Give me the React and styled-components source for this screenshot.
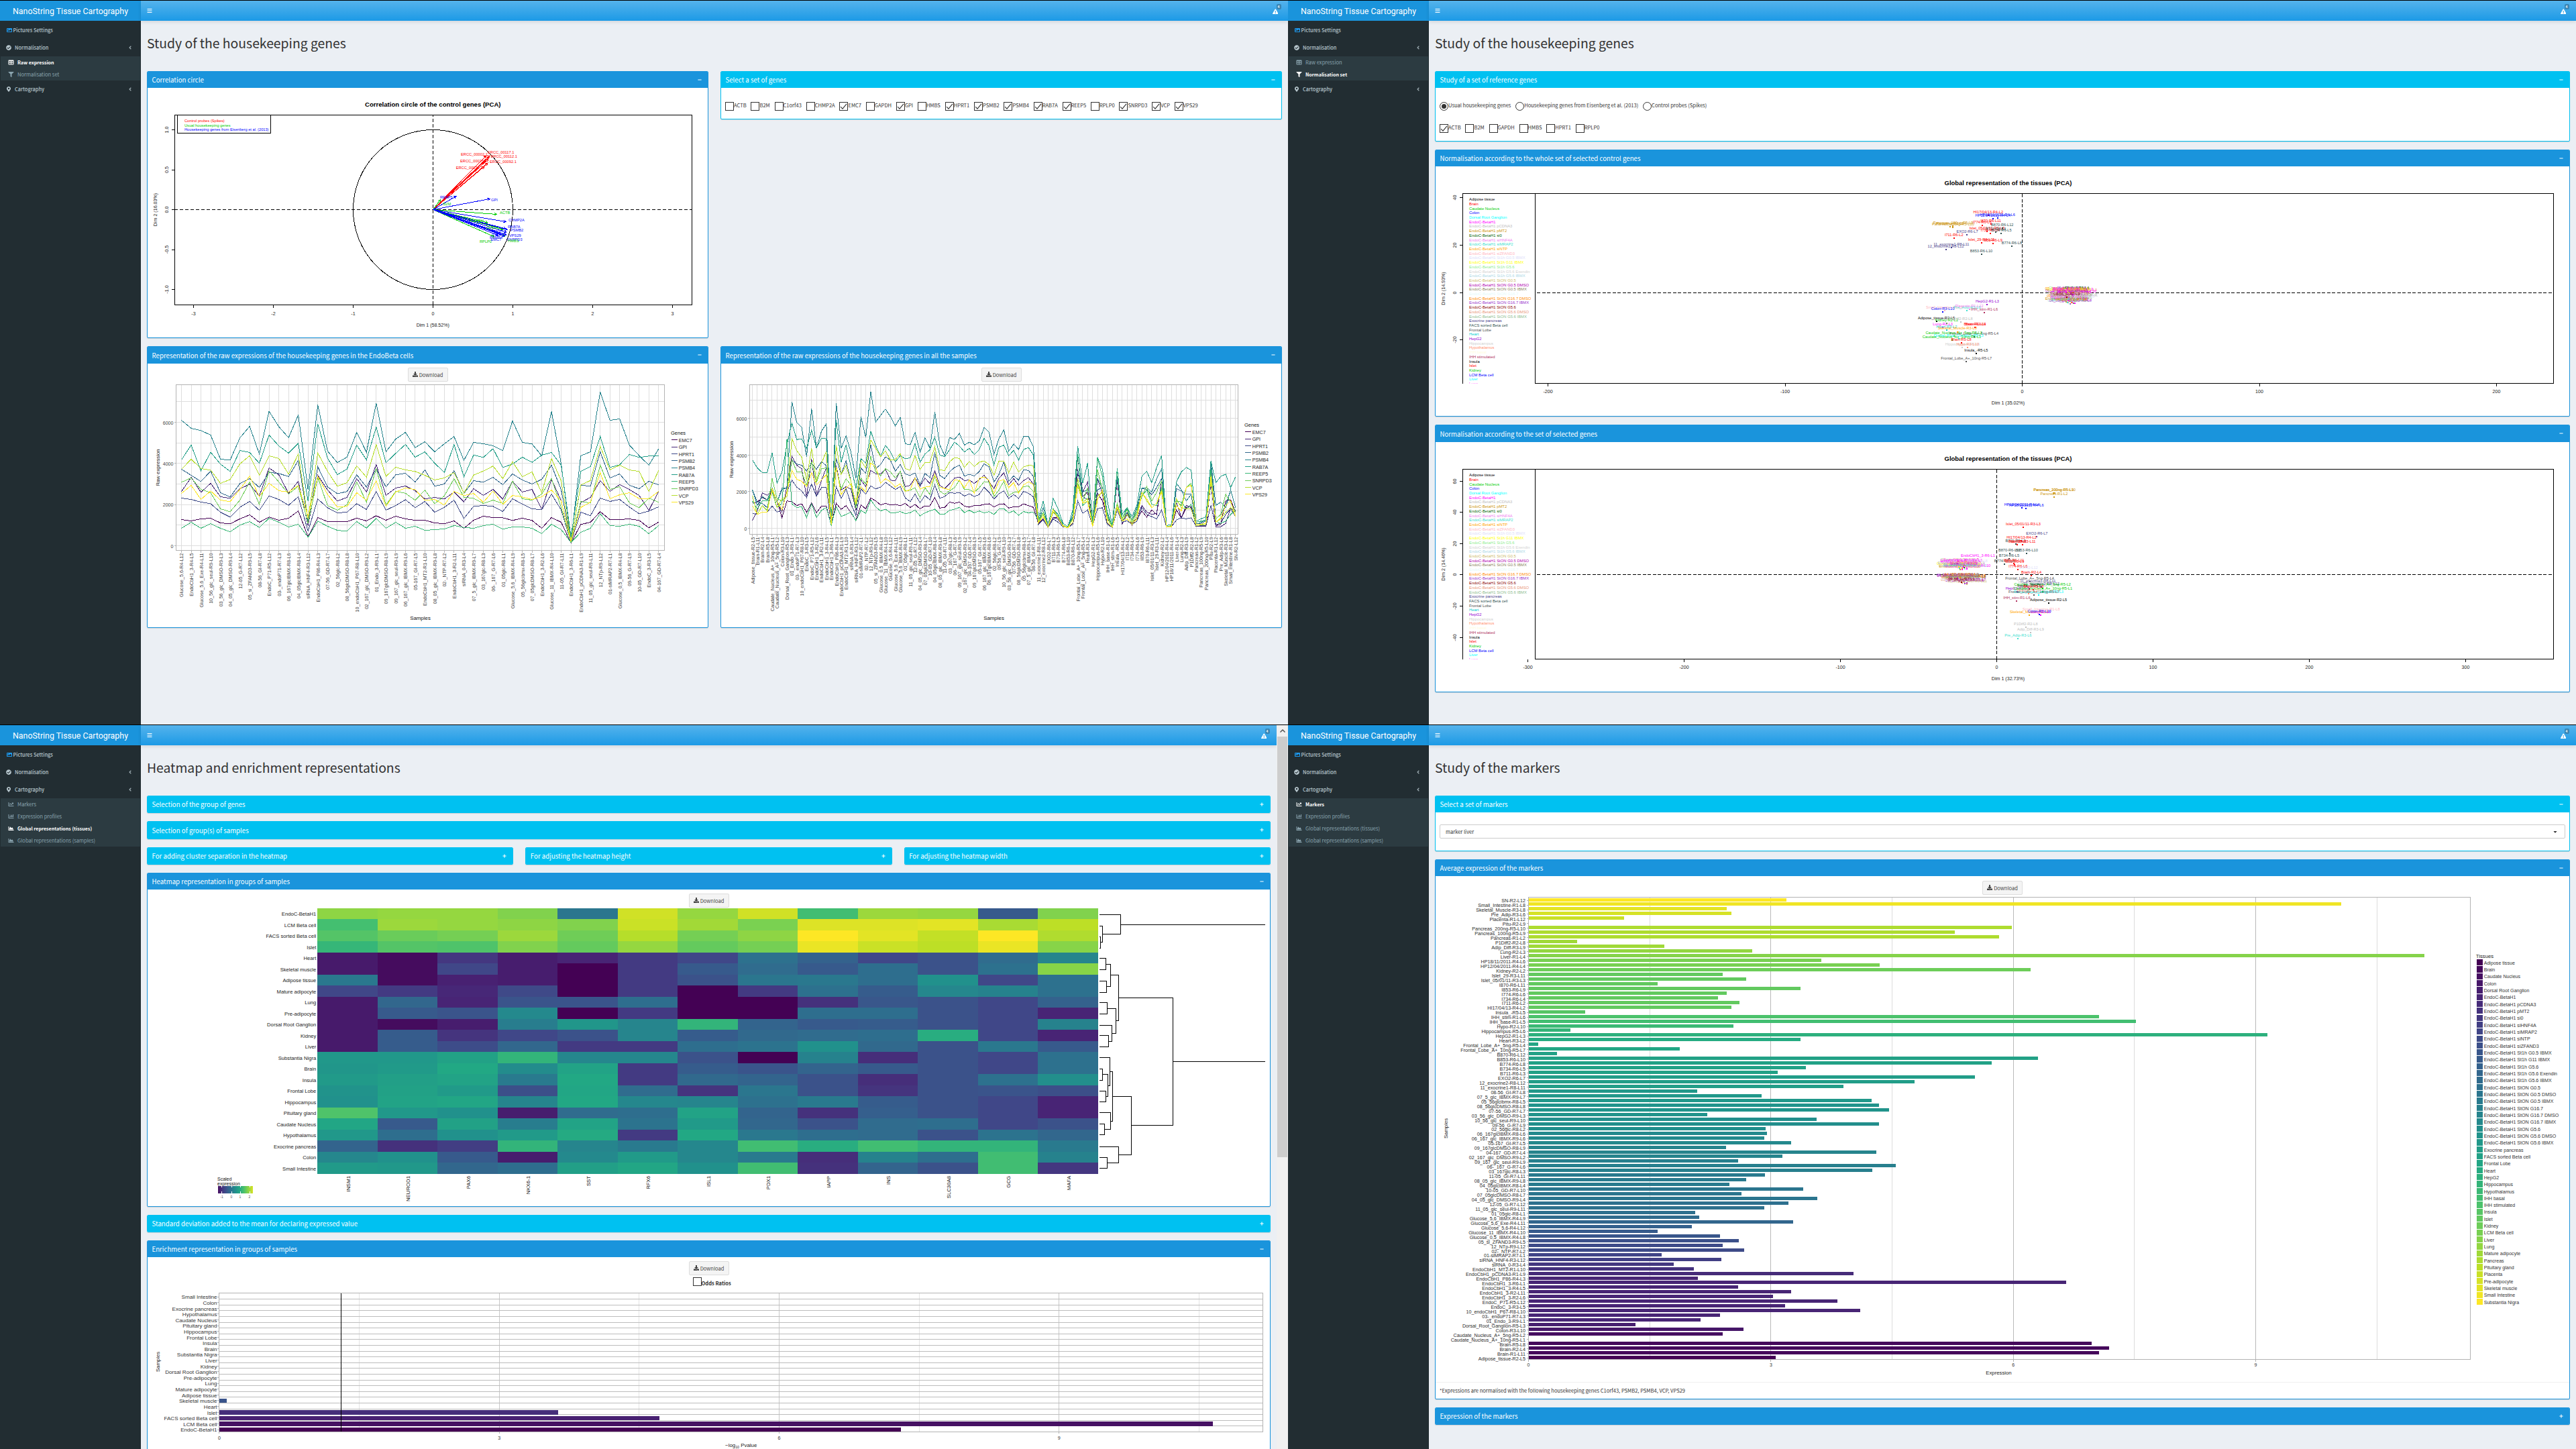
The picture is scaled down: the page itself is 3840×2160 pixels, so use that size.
import React from "react";
import styled, { createGlobalStyle, css } from "styled-components";
import {
  FaBars, FaCheckCircle, FaMapMarkerAlt, FaTable, FaFilter, FaChartLine, FaChartBar,
  FaChartArea, FaExclamationTriangle, FaDownload, FaAngleLeft, FaImage, FaCaretDown,
  FaChevronUp, FaChevronDown, FaMinus, FaPlus,
} from "react-icons/fa";

const BLUE = "#1a94dc";
const CYAN = "#00c1f1";
const UI = '"Noto Sans CJK SC", "Noto Sans", sans-serif';
const PLOT = '"Liberation Sans", Arial, sans-serif';

/* ---------- shell ---------- */

const Global = createGlobalStyle`
  html, body { margin: 0; padding: 0; background: #ebeff4; }
  *, *::before, *::after { box-sizing: border-box; }
`;

const Wall = styled.div`
  width: 3840px;
  height: 2160px;
  display: grid;
  grid-template-columns: 1920px 1920px;
  grid-template-rows: 1080px 1080px;
  overflow: hidden;
  font-family: ${UI};
  font-size: 7.55px;
  color: #333;
`;

const Frame = styled.section`
  border-top: 1px solid #000;
  display: grid;
  grid-template-columns: 210px 1fr ${(p) => (p.$scroll ? "17px" : "")};
  overflow: hidden;
  background: #ebeff4;
`;

const Sidebar = styled.aside`
  background: #222d32;
  color: #b8c7ce;
`;

const Logo = styled.div`
  height: 30px;
  line-height: 31px;
  background: ${BLUE};
  color: #fff;
  text-align: center;
  font-family: Roboto, sans-serif;
  font-size: 12.4px;
  white-space: nowrap;
`;

const MenuRow = styled.div`
  height: ${(p) => (p.$first ? 27 : 26)}px;
  padding: 0 12px 0 ${(p) => (p.$first ? 9.5 : 9)}px;
  display: flex;
  align-items: center;
  font-weight: 500;
  font-size: 7.4px;
  line-height: 10px;
  svg { margin-right: ${(p) => (p.$first ? 2 : 5)}px; flex: none; width: 8px; height: 8px; }
  svg.angle { margin: 0 1px 0 auto; width: 6px; height: 8px; opacity: 0.85; }
`;

const SubMenu = styled.div`
  margin: 0 1px;
  background: #2c3b41;
`;

const SubRow = styled.div`
  height: 18px;
  display: flex;
  align-items: center;
  padding-left: 11px;
  gap: 5px;
  line-height: 10px;
  font-size: ${(p) => (p.$on ? 7.1 : 7.55)}px;
  font-weight: ${(p) => (p.$on ? 700 : 400)};
  color: ${(p) => (p.$on ? "#fff" : "#8aa4af")};
  svg { width: 9px; height: 8px; }
`;

const Main = styled.main`
  display: flex;
  flex-direction: column;
  min-width: 0;
`;

const TopBar = styled.header`
  height: 30px;
  flex: none;
  background: linear-gradient(#55b3ec, #1c9ae6);
  box-shadow: 0 2px 5px rgba(0, 0, 0, 0.1);
  color: #fff;
  display: flex;
  align-items: center;
  justify-content: space-between;
  padding: 0 15px 0 8.5px;
`;

const Alert = styled.span`
  position: relative;
  display: inline-flex;
  padding-top: 2px;
`;

const Badge = styled.span`
  position: absolute;
  left: 6px;
  top: -5px;
  width: 7px;
  height: 8px;
  border-radius: 2px;
  background: #3a86b4;
  font: 700 5px/8px ${PLOT};
  text-align: center;
`;

const Content = styled.div`
  padding: 0 9px;
  display: flex;
  flex-direction: column;
`;

const Title = styled.h1`
  margin: 0;
  height: 75px;
  line-height: 66px;
  font-size: 19.35px;
  font-weight: 400;
`;

const Columns = styled.div`
  display: grid;
  grid-template-columns: repeat(${(p) => p.$n}, 1fr);
  gap: 18px;
  align-items: start;
`;

const Panel = styled.section`
  margin-bottom: ${(p) => p.$mb || 12}px;
  height: ${(p) => p.$h}px;
  flex: none;
  background: #fff;
  border: 1px solid ${(p) => p.$tone};
  border-radius: 2px;
  box-shadow: 0 1px 1px rgba(0, 0, 0, 0.12);
  overflow: hidden;
  display: flex;
  flex-direction: column;
`;

const PanelHead = styled.div`
  flex: none;
  height: ${(p) => (p.$h ? p.$h : 24)}px;
  ${(p) => p.$full && css`height: 100%;`}
  background: ${(p) => p.$tone};
  color: #fff;
  font-size: 9.68px;
  line-height: 12px;
  display: flex;
  align-items: center;
  justify-content: space-between;
  padding: 0 9px 0 6.5px;
  svg { width: 6px; height: 6px; margin-top: -1px; }
`;

const PanelBody = styled.div`
  flex: 1;
  min-height: 0;
  display: flex;
  flex-direction: column;
  align-items: stretch;
`;

const Choices = styled.div`
  display: flex;
  padding: ${(p) => p.$top}px 6px 0 ${(p) => p.$left || 6}px;
`;

const Choice = styled.label`
  display: flex;
  margin-right: 6.8px;
  line-height: 9px;
  white-space: nowrap;
  font-weight: ${(p) => (p.$bold ? 700 : 400)};
  align-items: ${(p) => (p.$bold ? "flex-end" : "flex-start")};
`;

const Tick = styled.span`
  width: 13px;
  height: 13px;
  flex: none;
  border: 1px solid #333;
  border-radius: ${(p) => (p.$round ? "50%" : "0")};
  display: inline-flex;
  align-items: center;
  justify-content: center;
`;

const Dot = styled.span`
  width: 7px;
  height: 7px;
  border-radius: 50%;
  background: #333;
`;

const Download = styled.button`
  flex: none;
  align-self: center;
  margin: ${(p) => p.$top || 6}px 0 0;
  width: 60px;
  height: 21px;
  padding: 0;
  border: 1px solid #ddd;
  border-radius: 2px;
  background: #f4f4f4;
  color: #444;
  font: 400 7.5px/10px ${UI};
  display: flex;
  align-items: center;
  justify-content: center;
  gap: 2px;
  svg { width: 8px; height: 8px; margin-top: -1px; }
`;

const Select = styled.div`
  margin: 18px 6px 0;
  height: 21px;
  border: 1px solid #ccc;
  border-radius: 2px;
  padding: 0 10px 0 8px;
  display: flex;
  align-items: center;
  justify-content: space-between;
`;

const FootNote = styled.div`
  height: 25px;
  flex: none;
  border-top: 1px solid #f0f0f0;
  padding: 0 6px;
  line-height: 24px;
`;

const ScrollTrack = styled.div`
  background: #f0f0f0;
  display: flex;
  flex-direction: column;
  align-items: center;
  color: #505050;
  > svg { width: 8px; height: 17px; flex: none; }
`;

const ScrollThumb = styled.div`
  width: 15px;
  height: 627px;
  background: #cdcdcd;
  margin-bottom: auto;
`;

const Chart = styled.svg`
  display: block;
  flex: none;
  font-family: ${PLOT};
  shape-rendering: crispEdges;
  width: ${(p) => p.width}px;
  height: ${(p) => p.height}px;
`;

/* ---------- shared pieces ---------- */

const TickMark = () => (
  <svg width="11" height="11" viewBox="0 0 11 11" fill="none" stroke="#333" strokeWidth="1.1">
    <path d="M1 6.2 L4 9.2 L10 1.8" />
  </svg>
);

function Box({ title, tone = BLUE, h, headH, mb, open = true, children }) {
  return (
    <Panel $tone={tone} $h={h} $mb={mb}>
      <PanelHead $tone={tone} $h={headH} $full={!open}>
        <span>{title}</span>
        {open ? <FaMinus /> : <FaPlus />}
      </PanelHead>
      {open && <PanelBody>{children}</PanelBody>}
    </Panel>
  );
}

const DownloadButton = ({ top }) => (
  <Download $top={top}><FaDownload />Download</Download>
);

function Checks({ items, checked, top, left }) {
  return (
    <Choices $top={top} $left={left}>
      {items.map((g) => (
        <Choice key={g}><Tick>{checked.includes(g) && <TickMark />}</Tick>{g}</Choice>
      ))}
    </Choices>
  );
}

const NORMALISATION = [["Raw expression", FaTable], ["Normalisation set", FaFilter]];
const CARTOGRAPHY = [
  ["Markers", FaChartLine],
  ["Expression profiles", FaChartBar],
  ["Global representations (tissues)", FaChartArea],
  ["Global representations (samples)", FaChartArea],
];

const Sub = ({ items, active }) => (
  <SubMenu>
    {items.map(([name, Icon]) => (
      <SubRow key={name} $on={name === active}><Icon />{name}</SubRow>
    ))}
  </SubMenu>
);

function Screen({ title, section, active, scroll, children }) {
  return (
    <Frame $scroll={scroll}>
      <Sidebar>
        <Logo>NanoString Tissue Cartography</Logo>
        <MenuRow $first><FaImage color="#1d9af0" />Pictures Settings</MenuRow>
        <MenuRow><FaCheckCircle />Normalisation<FaAngleLeft className="angle" /></MenuRow>
        {section === "norm" && <Sub items={NORMALISATION} active={active} />}
        <MenuRow><FaMapMarkerAlt />Cartography<FaAngleLeft className="angle" /></MenuRow>
        {section === "carto" && <Sub items={CARTOGRAPHY} active={active} />}
      </Sidebar>
      <Main>
        <TopBar>
          <FaBars size={8} />
          <Alert><FaExclamationTriangle size={8.5} /><Badge>4</Badge></Alert>
        </TopBar>
        <Content>
          <Title>{title}</Title>
          {children}
        </Content>
      </Main>
      {scroll && (
        <ScrollTrack><FaChevronUp /><ScrollThumb /><FaChevronDown /></ScrollTrack>
      )}
    </Frame>
  );
}

/* ---------- colour scale and sample data ---------- */

const STOPS = ["440154", "482475", "414487", "355f8d", "2a788e", "21918c", "22a884", "44bf70", "7ad151", "bddf26", "fde725"]
  .map((h) => [0, 2, 4].map((i) => parseInt(h.slice(i, i + 2), 16)));

function viridis(t) {
  const p = Math.min(Math.max(t, 0), 1) * 10;
  const i = Math.min(Math.floor(p), 9);
  const c = STOPS[i].map((v, k) => Math.round(v + (STOPS[i + 1][k] - v) * (p - i)));
  return `rgb(${c.join(",")})`;
}

const TISSUES = [
  "Adipose tissue", "Brain", "Caudate Nucleus", "Colon", "Dorsal Root Ganglion", "EndoC-BetaH1",
  "EndoC-BetaH1 pCDNA3", "EndoC-BetaH1 pMT2", "EndoC-BetaH1 si0", "EndoC-BetaH1 siHNF4A",
  "EndoC-BetaH1 siMRAP2", "EndoC-BetaH1 siNTP", "EndoC-BetaH1 siZFAND3", "EndoC-BetaH1 St1h G0.5 IBMX",
  "EndoC-BetaH1 St1h G11 IBMX", "EndoC-BetaH1 St1h G5.6", "EndoC-BetaH1 St1h G5.6 Exendin",
  "EndoC-BetaH1 St1h G5.6 IBMX", "EndoC-BetaH1 StON G0.5", "EndoC-BetaH1 StON G0.5 DMSO",
  "EndoC-BetaH1 StON G0.5 IBMX", "EndoC-BetaH1 StON G16.7", "EndoC-BetaH1 StON G16.7 DMSO",
  "EndoC-BetaH1 StON G16.7 IBMX", "EndoC-BetaH1 StON G5.6", "EndoC-BetaH1 StON G5.6 DMSO",
  "EndoC-BetaH1 StON G5.6 IBMX", "Exocrine pancreas", "FACS sorted Beta cell", "Frontal Lobe",
  "Heart", "HepG2", "Hippocampus", "Hypothalamus", "IHH basal", "IHH stimulated", "Insula", "Islet",
  "Kidney", "LCM Beta cell", "Liver", "Lung", "Mature adipocyte", "Pancreas", "Pituitary gland",
  "Placenta", "Pre-adipocyte", "Skeletal muscle", "Small Intestine", "Substantia Nigra",
];

const TISSUE_COLORS = [
  "#000", "#f00", "#00cd00", "#00f", "#0ff", "#f0f", "#bebebe", "#cd950c", "#006400", "#ee82ee",
  "#40e0d0", "#ffa500", "#ffb6c1", "#e0e0fa", "#ff0", "#90ee90", "#d3d3d3", "#add8e6", "#cdba6c",
  "#b000b0", "#8b8360", "#e4fafa", "#ff8c00", "#9932cc", "#8b0000", "#e9967a", "#8fbc8f", "#483d8b",
  "#2f4f4f", "#4d4d4d", "#00ced1", "#9400d3", "#cfcfcf", "#ff9070", "#fffde0", "#b03060",
  "#000", "#f00", "#00cd00", "#00f", "#0ff", "#f0f", "#bebebe", "#cd950c", "#006400", "#ee82ee",
  "#40e0d0", "#ffa500", "#ffb6c1", "#e0e0fa",
];

const PER_TISSUE = [1, 3, 2, 1, 1, 10, 1, 1, 1, 1, 1, 2, 1, 1, 1, 1, 1, 1, 3, 3, 3, 3, 3, 3, 3, 3, 3, 3, 5, 2, 1, 1, 1, 1, 1, 1, 1, 8, 1, 2, 1, 1, 2, 3, 1, 1, 1, 1, 1, 1];
const TISSUE_OF = PER_TISSUE.flatMap((n, i) => Array(n).fill(i));

const SAMPLES = `Adipose_tissue-R2-L5 Brain-R1-L11 Brain-R2-L4 Brain-R5-L8 Caudate_Nucleus_A+_10ng-R5-L1
Caudate_Nucleus_A+_5ng-R5-L2 Colon-R3-L10 Dorsal_Root_Ganglion-R5-L3 01_Endo_3-R9-L1 03-_endoP71-R7-L3
10_endoCbH1_P67-R8-L10 EndoC_3-R3-L5 EndoC_P71-R5-L12 EndoCbH1_3-R2-L6 EndoCbH1_3-R2-L11 EndoCbH1_3-R4-L5
EndoCbH1_3-R6-L1 EndoCbH1_P86-R4-L3 EndoCbH1_pCDNA3-R1-L9 EndoCbH1_MT2-R1-L10 siRNA_0-R3-L4
siRNA_HNF4-R3-L12 01-siMRAP2-R7-L1 02-_NTP-R7-L2 12_NTp-R9-L12 05_si_ZFAND3-R9-L5 Glucose_0,5_IBMX-R4-L8
Glucose_11_IBMX-R4-L10 Glucose_5,6-R4-L12 Glucose_5,6_Exe-R4-L11 Glucose_5,6_IBMX-R4-L9 01_05glc-R8-L1
11_05_glc_seul-R9-L11 12-05_G-R7-L12 04_05_glc_DMSO-R9-L4 07_05glcDMSO-R8-L7 10-05_GD-R7-L10
04_05glcIBMX-R8-L4 08_05_glc_IBMX-R9-L8 11-05_GI-R7-L11 03_167glc-R8-L3 06-_167_G-R7-L6
09_167_glc_seul-R9-L9 02_167_glc_DMSO-R9-L2 04-167_GD-R7-L4 09_167glcDMSO-R8-L9 05-167_GI-R7-L5
06_167_glc_IBMX-R9-L6 06_167glcIBMX-R8-L6 02_56glc-R8-L2 09-56_G-R7-L9 10_56_glc_seul-R9-L10
03_56_glc_DMSO-R9-L3 07-56_GD-R7-L7 08_56glcDMSO-R8-L8 05_56glcibmx-R8-L5 07_5_glc_IBMX-R9-L7
08-56_GI-R7-L8 11_exocrine1-R8-L11 12_exocrine2-R8-L12 EXO2-R6-L7 B711-R6-L3 B734-R6-L5 B774-R6-L8
B853-R6-L10 B870-R6-L12 Frontal_Lobe_A+_10ng-R5-L7 Frontal_Lobe_A+_5ng-R5-L4 Heart-R3-L2 HepG2-R1-L3
Hippocampus-R5-L6 Hypo-R2-L10 IHH_base-R1-L5 IHH_stim-R1-L6 Insula_-R5-L5 HI17/04/13-R4-L2 I711-R6-L2
I734-R6-L4 I774-R6-L6 I853-R6-L9 I870-R6-L11 Islet_05/01/11-R3-L3 Islet_29-R3-L11 Kidney-R2-L2
HP12/04/2011-R4-L4 HP18/11/2011-R4-L6 Liver-R1-L4 Lung-R2-L3 Adip_Diff-R3-L9 P1Diff2-R2-L8 Pancreas-R1-L2
Pancreas_100ng-R5-L9 Pancreas_200ng-R5-L10 Pitu-R2-L9 Placenta-R1-L12 Pre_Adip-R3-L6
Skeletal_Muscle-R3-L8 Small_Intestine-R1-L8 SN-R2-L12`.split(/\s+/);

const ENDO = `Glucose_5,6-R4-L12 EndoCbH1_3-R4-L5 Glucose_5,6_Exe-R4-L11 10_56_glc_seul-R9-L10
03_56_glc_DMSO-R9-L3 04_05_glc_DMSO-R9-L4 12-05_G-R7-L12 05_si_ZFAND3-R9-L5 08-56_GI-R7-L8
EndoC_P71-R5-L12 03-_endoP71-R7-L3 06_167glcIBMX-R8-L6 04_05glcIBMX-R8-L4 siRNA_HNF4-R3-L12
EndoCbH1_P86-R4-L3 07-56_GD-R7-L7 02_56glc-R8-L2 08_56glcDMSO-R8-L8 10_endoCbH1_P67-R8-L10
02_167_glc_DMSO-R9-L2 01_Endo_3-R9-L1 09_167glcDMSO-R8-L9 09_167_glc_seul-R9-L9 06_167_glc_IBMX-R9-L6
05-167_GI-R7-L5 EndoCbH1_MT2-R1-L10 08_05_glc_IBMX-R9-L8 02-_NTP-R7-L2 EndoCbH1_3-R2-L11 siRNA_0-R3-L4
07_5_glc_IBMX-R9-L7 03_167glc-R8-L3 06-_167_G-R7-L6 01_05glc-R8-L1 Glucose_5,6_IBMX-R4-L9
05_56glcibmx-R8-L5 07_05glcDMSO-R8-L7 EndoCbH1_3-R2-L6 Glucose_11_IBMX-R4-L10 11-05_GI-R7-L11
EndoCbH1_3-R6-L1 EndoCbH1_pCDNA3-R1-L9 11_05_glc_seul-R9-L11 12_NTp-R9-L12 01-siMRAP2-R7-L1
Glucose_0,5_IBMX-R4-L8 09-56_G-R7-L9 10-05_GD-R7-L10 EndoC_3-R3-L5 04-167_GD-R7-L4`.split(/\s+/);

const GENES = ["EMC7", "GPI", "HPRT1", "PSMB2", "PSMB4", "RAB7A", "REEP5", "SNRPD3", "VCP", "VPS29"];

/* plotted heights of each gene: `endo` follows ENDO, `head`/`tail` the remaining samples */
const SERIES = {
  EMC7: {
    endo: [823,829,820,817,838,842,820,802,835,812,826,817,785,900,814,832,832,832,817,829,806,826,808,820,826,826,838,842,829,862,826,808,814,815,827,817,827,862,814,835,928,845,835,788,823,823,820,827,860,834],
    head: [750,745,725,735,695,740,815,740],
    tail: [840,820,858,815,815,850,858,835,540,720,700,850,705,740,820,855,650,845,790,848,820,785,812,780,800,650,855,855,780,817,770,765,853,853,853,760,850,845,740,735,790],
  },
  GPI: {
    endo: [698,634,701,661,721,728,686,665,718,592,623,706,652,850,625,690,740,724,640,700,577,715,682,673,694,731,724,731,700,743,685,715,688,731,652,700,688,778,643,740,925,747,724,649,697,667,689,715,782,697],
    head: [827,785,704,714,695,740,790,675],
    tail: [842,820,858,815,820,855,858,840,612,700,655,850,640,710,840,857,640,840,800,840,815,760,790,800,795,650,857,855,745,815,760,770,852,852,852,660,855,855,840,770,790],
  },
  HPRT1: {
    endo: [727,733,745,752,790,812,768,742,782,717,733,759,721,875,731,770,793,790,752,778,698,781,760,734,770,742,790,768,736,818,764,760,764,787,730,754,775,779,709,780,925,790,806,727,742,733,767,797,785,766],
    head: [795,800,790,790,762,790,780,700],
    tail: [845,825,858,820,835,855,858,845,740,795,780,850,775,770,845,858,780,835,828,845,830,770,800,810,820,780,857,855,825,815,820,815,852,850,850,760,845,840,800,775,810],
  },
  PSMB2: {
    endo: [598,625,653,606,703,722,662,640,680,612,617,631,559,830,587,677,707,698,623,678,596,677,623,616,655,601,674,664,605,706,649,656,634,667,619,646,664,643,580,690,925,669,674,520,637,619,670,685,652,668],
    head: [690,745,750,770,690,745,683,683],
    tail: [835,790,857,790,810,850,858,810,600,720,735,845,690,680,800,856,640,830,790,830,780,683,690,712,680,640,855,852,685,695,710,710,840,840,830,570,820,800,760,690,770],
  },
  PSMB4: {
    endo: [379,415,425,445,553,557,458,406,530,339,408,457,355,690,310,516,568,544,433,522,303,520,463,433,501,475,520,484,452,558,478,484,493,515,382,478,485,538,340,575,920,538,520,253,379,373,490,537,580,507],
    head: [690,760,720,735,680,745,690,680],
    tail: [830,770,855,775,800,848,858,800,540,700,690,840,640,680,790,855,630,820,775,825,770,683,680,700,640,597,855,850,660,690,740,710,845,835,825,565,760,745,770,690,770],
  },
  RAB7A: {
    endo: [556,490,605,522,575,608,514,523,571,445,494,526,482,740,395,548,622,597,490,556,410,569,527,487,544,520,571,612,487,632,534,545,506,590,575,544,567,535,523,580,900,608,586,451,590,578,532,545,539,538],
    head: [556,592,613,614,525,660,610,490],
    tail: [820,740,855,728,775,840,855,780,495,660,570,830,545,600,740,850,595,800,770,810,760,628,608,658,590,537,850,845,655,610,590,602,830,820,810,562,658,630,620,680,632],
  },
  REEP5: {
    endo: [862,835,862,841,862,878,848,832,858,817,835,856,844,902,830,853,871,875,832,861,818,862,835,862,853,871,868,865,850,858,862,850,844,866,856,856,862,886,844,868,925,880,862,797,850,853,844,853,886,850],
    head: [740,775,740,740,700,770,750,465],
    tail: [825,790,855,780,800,850,858,815,530,760,740,845,550,630,800,850,600,820,770,830,790,720,690,755,760,680,855,850,740,745,775,755,835,830,825,600,830,840,830,800,780],
  },
  SNRPD3: {
    endo: [656,637,688,703,775,788,736,655,755,605,655,709,674,840,635,760,781,757,655,745,595,758,697,705,737,691,752,717,640,723,728,751,736,751,652,730,736,709,640,770,925,742,749,579,688,676,748,770,727,746],
    head: [715,800,760,780,640,730,740,720],
    tail: [830,790,855,775,810,848,858,820,660,740,680,845,600,690,810,855,750,820,780,830,780,720,675,740,700,650,855,850,740,760,680,660,845,845,840,620,820,800,710,745,790],
  },
  VCP: {
    endo: [598,553,595,602,661,644,574,538,625,538,550,620,530,820,525,607,674,658,583,634,488,630,589,601,608,625,646,637,613,705,624,606,584,640,564,632,610,703,550,650,920,669,648,496,600,580,601,608,697,604],
    head: [715,800,760,785,690,770,730,720],
    tail: [835,800,857,790,815,850,858,820,640,745,730,850,720,700,820,857,760,825,800,840,800,700,740,770,750,690,857,852,730,770,775,775,850,848,845,650,835,820,790,770,800],
  },
  VPS29: {
    endo: [706,670,733,695,736,743,688,629,720,661,694,700,671,810,630,710,767,764,703,737,649,764,700,682,689,737,733,758,697,716,706,746,695,755,715,722,733,721,691,740,920,769,745,613,730,712,703,730,730,697],
    head: [760,800,790,790,685,740,780,700],
    tail: [838,810,858,780,815,853,860,835,670,750,740,855,735,690,835,857,770,830,820,845,820,705,730,770,750,700,857,855,760,785,680,670,843,843,840,630,835,815,760,740,810],
  },
};
const endoValue = (v) => ((940 - v) / 184) * 2000;
const wideValue = (v) => ((862 - v) / 163.6) * 2000;
const ENDO_SERIES = GENES.map((g) => SERIES[g].endo.map(endoValue));
const ALL_SERIES = GENES.map((g) => [
  ...SERIES[g].head.map(wideValue),
  ...SAMPLES.slice(8, 58).map((s) => endoValue(SERIES[g].endo[ENDO.indexOf(s)])),
  ...SERIES[g].tail.map(wideValue),
]);

/* ---------- charts ---------- */

const T = ({ x, y, s = 7.1, a = "middle", fill = "#444", w, r, children }) => (
  <text
    x={x} y={y} dy=".35em" fontSize={s} textAnchor={a} fill={fill} fontWeight={w}
    transform={r ? `rotate(-90 ${x} ${y})` : undefined}
  >{children}</text>
);

function LineChart({ left, names, series, frame, bottom, first, step, unit, zero, legendX, legendY, labelY }) {
  const [fx, fw] = frame;
  const fy = 573.5;
  const px = (i) => first + i * step;
  const py = (v) => zero - v * unit;
  return (
    <Chart width={835} height={366} viewBox={`${left} 569 835 366`}>
      <g stroke="#dedede" strokeWidth="1">
        {[0, 1, 2, 3, 4, 5, 6, 7].map((k) => <path key={k} d={`M${fx} ${py(k * 1000)}h${fw}`} />)}
        {names.map((n, i) => <path key={n} d={`M${px(i)} ${fy}V${bottom}`} />)}
      </g>
      {series.map((s, k) => (
        <polyline
          key={k} fill="none" stroke={viridis(k / 9)} strokeWidth="1"
          points={s.map((v, i) => `${px(i).toFixed(1)},${py(v).toFixed(1)}`).join(" ")}
        />
      ))}
      <rect x={fx} y={fy} width={fw} height={bottom - fy} fill="none" stroke="#b3b3b3" />
      {[0, 2000, 4000, 6000].map((v) => (
        <g key={v}>
          <path d={`M${fx - 3} ${py(v)}h3`} stroke="#b3b3b3" />
          <T x={fx - 4} y={py(v) + 0.8} a="end">{v}</T>
        </g>
      ))}
      {names.map((n, i) => (
        <g key={n}>
          <path d={`M${px(i)} ${bottom}v3`} stroke="#b3b3b3" />
          <T x={px(i) + 0.5} y={bottom + 4} a="end" r>{n}</T>
        </g>
      ))}
      <T x={fx - 27} y={labelY} s={7.75} fill="#111" r>Raw expression</T>
      <T x={fx + fw / 2} y={921.7} s={7.9} fill="#111">Samples</T>
      <T x={legendX} y={legendY} s={7.5} a="start" fill="#111">Genes</T>
      {GENES.map((g, k) => (
        <g key={g}>
          <path d={`M${legendX + 1} ${legendY + 10.6 + k * 10.33}h8.5`} stroke={viridis(k / 9)} strokeWidth="1" />
          <T x={legendX + 11.7} y={legendY + 11.2 + k * 10.33} s={7.2} a="start" fill="#222">{g}</T>
        </g>
      ))}
    </Chart>
  );
}

const ARROWS = [
  ["#f00", 730, 232], ["#f00", 724.7, 232], ["#f00", 728, 237], ["#f00", 727, 243], ["#f00", 722, 248], ["#f00", 729, 234],
  ["#00cd00", 656.5, 298], ["#00cd00", 740.4, 319.5], ["#00cd00", 727, 332], ["#00cd00", 737, 353], ["#00cd00", 750, 342], ["#00cd00", 753, 352],
  ["#00f", 680, 292.5], ["#00f", 730, 296.5], ["#00f", 754, 330.5], ["#00f", 754, 341], ["#00f", 756.5, 342.5], ["#00f", 755, 346],
  ["#00f", 755, 350], ["#00f", 752, 352], ["#00f", 748, 350], ["#00f", 745, 348], ["#00f", 743, 351],
];
const ARROW_LABELS = [
  ["ERCC_00117.1", 727, 227, "#f00"], ["ERCC_00002.1", 687, 230, "#f00"], ["ERCC_00112.1", 731.5, 233, "#f00"],
  ["ERCC_00035.1", 686, 240, "#f00"], ["ERCC_00092.1", 730, 241, "#f00"], ["ERCC_00034.1", 679.7, 250, "#f00"],
  ["REEP5", 656, 294, "#00f"], ["B2M", 660.5, 304, "#00cd00"], ["GPI", 732, 298, "#00f"], ["ACTB", 745, 317, "#00cd00"],
  ["CHMP2A", 758, 328, "#00f"], ["GAPDH", 701, 329, "#00cd00"], ["RAB7A", 757, 338, "#00f"], ["PSMB2", 761, 343, "#00f"],
  ["HPRT1", 725, 340, "#00cd00"], ["VCP", 736, 345, "#00f"], ["C1orf43", 733, 349, "#00f"], ["VPS29", 759, 351, "#00f"],
  ["PSMB4", 730, 354, "#00f"], ["EMC7", 731.5, 357, "#00f"], ["SNRPD3", 755.5, 357, "#00f"], ["HMBS", 757, 359.5, "#00cd00"],
  ["RPLP0", 715, 360, "#00cd00"],
];

function CorrelationCircle() {
  const cx = 645.5, cy = 312.5;
  return (
    <Chart width={835} height={372} viewBox="220 131 835 372">
      <T x={645.3} y={155.7} s={9.6} w="700" fill="#000">Correlation circle of the control genes (PCA)</T>
      <rect x={260.5} y={171.5} width={771} height={283} fill="none" stroke="#000" />
      <rect x={264.5} y={171.5} width={139} height={27} fill="none" stroke="#000" />
      <T x={275} y={180.3} s={5.7} a="start" fill="#f00">Control probes (Spikes)</T>
      <T x={275} y={186.6} s={5.7} a="start" fill="#00cd00">Usual housekeeping genes</T>
      <T x={275} y={193.2} s={5.7} a="start" fill="#00f">Housekeeping genes from Eisenberg et al. (2013)</T>
      <circle cx={cx} cy={cy} r={119} fill="none" stroke="#000" />
      <path d={`M260 ${cy}H1031M${cx} 454V171`} stroke="#000" strokeDasharray="5 3" fill="none" />
      {[-3, -2, -1, 0, 1, 2, 3].map((v) => (
        <g key={v}>
          <path d={`M${cx + v * 119} 454.5v4.5`} stroke="#000" />
          <T x={cx + v * 119} y={467.5} fill="#222">{v}</T>
        </g>
      ))}
      {[-1, -0.5, 0, 0.5, 1].map((v) => (
        <g key={v}>
          <path d={`M260.5 ${cy - v * 119}h-4.5`} stroke="#000" />
          <T x={248.5} y={cy - v * 119} fill="#222" r>{v.toFixed(1)}</T>
        </g>
      ))}
      <T x={645.3} y={484.7} fill="#222">Dim 1 (58.52%)</T>
      <T x={232} y={312.5} fill="#222" r>Dim 2 (16.03%)</T>
      {ARROWS.map(([c, x, y], i) => {
        const a = Math.atan2(y - cy, x - cx);
        const tip = (d) => `${(x - 4 * Math.cos(a + d)).toFixed(1)} ${(y - 4 * Math.sin(a + d)).toFixed(1)}`;
        return <path key={i} d={`M${cx} ${cy}L${x} ${y}M${tip(0.5)}L${x} ${y}L${tip(-0.5)}`} stroke={c} fill="none" />;
      })}
      {ARROW_LABELS.map(([n, x, y, c]) => <T key={n} x={x} y={y} s={5.7} a="start" fill={c}>{n}</T>)}
    </Chart>
  );
}

const tissueColor = (name) => TISSUE_COLORS[TISSUE_OF[SAMPLES.indexOf(name)]];

const PCA_ALL = [
  ["HI17/04/13-R4-L2", 194, 467], ["HP12/04/2011-R4-L4", 205, 475], ["HP18/11/2011-R4-L6", 216, 473],
  ["Pancreas_200ng-R5-L10", 112, 494], ["Pancreas_100ng-R5-L9", 112, 491], ["Pancreas-R1-L2", 105, 493],
  ["I711-R6-L2", 114, 518], ["EXO2-R6-L7", 145, 510], ["11_exocrine1-R8-L11", 108, 538], ["12_exocrine2-R8-L12", 95, 543],
  ["I774-R6-L6", 180, 490], ["I870-R6-L11", 200, 487], ["B870-R6-L12", 227, 496], ["Islet_05/01/11-R3-L3", 191, 503],
  ["B711-R6-L3", 212, 504], ["I734-R6-L4", 199, 507], ["B734-R6-L5", 225, 507], ["Islet_29-R3-L11", 178, 528],
  ["I853-R6-L9", 205, 530], ["B774-R6-L8", 249, 535], ["B853-R6-L10", 178, 553], ["HepG2-R1-L3", 192, 664],
  ["IHH_stim-R1-L6", 185, 682], ["Small_Intestine-R1-L8", 92, 678], ["Colon-R3-L10", 88, 680],
  ["Pre_Adip-R3-L6", 145, 677], ["Placenta-R1-L12", 150, 674], ["Adipose_tissue-R2-L5", 73, 701],
  ["Kidney-R2-L2", 97, 705], ["P1Diff2-R2-L8", 130, 703], ["Brain-R1-L11", 163, 714], ["Brain-R2-L4", 165, 714],
  ["Lung-R2-L3", 88, 714], ["Heart-R3-L2", 97, 721], ["Skeletal_Muscle-R3-L8", 122, 724],
  ["Frontal_Lobe_A+_5ng-R5-L4", 161, 735], ["Caudate_Nucleus_A+_5ng-R5-L2", 114, 734],
  ["Dorsal_Root_Ganglion-R5-L3", 125, 740], ["Caudate_Nucleus_A+_10ng-R5-L1", 109, 743], ["Brain-R5-L8", 131, 748],
  ["Hippocampus-R5-L6", 134, 759], ["Hypo-R2-L10", 146, 759], ["Insula_-R5-L5", 166, 772],
  ["Frontal_Lobe_A+_10ng-R5-L7", 143, 790],
  ...ENDO.map((n, i) => [n, 388 + ((i * 37) % 25) - 12, 634 + ((i * 23) % 29)]),
];
const PCA_SELECTED = [
  ["Pancreas_200ng-R5-L10", 349, 1080], ["Pancreas_100ng-R5-L9", 347, 1079], ["Pancreas-R1-L2", 348, 1089],
  ["HP12/04/2011-R4-L4", 273, 1112], ["HP18/11/2011-R4-L6", 283, 1114], ["Islet_05/01/11-R3-L3", 276, 1155],
  ["EXO2-R6-L7", 308, 1176], ["HI17/04/13-R4-L2", 272, 1184], ["B711-R6-L3", 258, 1192], ["Islet_29-R3-L11", 274, 1194],
  ["I711-R6-L2", 262, 1194], ["B870-R6-L12", 244, 1213], ["B853-R6-L10", 284, 1213], ["B734-R6-L5", 243, 1225],
  ["EndoCbH1_3-R6-L1", 170, 1225], ["B774-R6-L8", 232, 1237], ["I870-R6-L11", 254, 1235], ["I853-R6-L9", 256, 1238],
  ["I774-R6-L6", 264, 1248], ["SN-R2-L12", 288, 1252], ["Brain-R2-L4", 295, 1262], ["Frontal_Lobe_A+_5ng-R5-L4", 291, 1275],
  ["11_exocrine1-R8-L11", 310, 1281], ["Hippocampus-R5-L6", 305, 1284], ["12_exocrine2-R8-L12", 318, 1287],
  ["Caudate_Nucleus_A+_5ng-R5-L2", 321, 1289], ["Insula_-R5-L5", 290, 1291], ["HepG2-R1-L3", 262, 1297],
  ["Caudate_Nucleus_A+_10ng-R5-L1", 322, 1297], ["Brain-R5-L8", 300, 1293], ["Dorsal_Root_Ganglion-R5-L3", 312, 1304],
  ["Frontal_Lobe_A+_10ng-R5-L7", 301, 1304], ["Hypo-R2-L10", 288, 1301], ["IHH_stim-R1-L6", 261, 1318],
  ["Adipose_tissue-R2-L5", 335, 1322], ["Small_Intestine-R1-L8", 318, 1343], ["Skeletal_Muscle-R3-L8", 290, 1349],
  ["Lung-R2-L3", 317, 1349], ["Colon-R3-L10", 314, 1348], ["P1Diff2-R2-L8", 282, 1376], ["Adip_Diff-R3-L9", 293, 1388],
  ["Pre_Adip-R3-L6", 264, 1401],
  ...ENDO.filter((n) => n !== "EndoCbH1_3-R6-L1").map((n, i) => {
    const upper = /Endo|endo|Glucose|si|NT/.test(n);
    return [n, 134 + ((i * 37) % 23) - 11, (upper ? 1233 : 1266) + ((i * 23) % 16)];
  }),
];

function Scatter({ top, height, frameY, frameH, titleY, zeroX, stepX, ticksX, yTicks, zeroY, points, dim1, dim2, legendY }) {
  const fx = 2180.5, fw = 1626, bottom = frameY + frameH;
  const dotX = (u) => 2840 + u / 1.568;
  const dotY = (v) => v / 1.479;
  const clip = `legend-${top}`;
  const shown = TISSUES.filter((t, i) => legendY + i * 6.704 < bottom + 1);
  return (
    <Chart width={1690} height={height} viewBox={`2140 ${top} 1690 ${height}`}>
      <defs><clipPath id={clip}><rect x={2150} y={frameY} width={140} height={frameH} /></clipPath></defs>
      <T x={2993.5} y={titleY} s={9.45} w="700" fill="#000">Global representation of the tissues (PCA)</T>
      <path d={`M${fx} ${bottom}V${frameY}H${fx + fw}V${bottom}H2288.5V${frameY}`} fill="none" stroke="#000" />
      <path d={`M2291 ${zeroY}H${fx + fw}M${zeroX} ${bottom}V${frameY}`} stroke="#000" strokeDasharray="5 2.5" fill="none" />
      <g clipPath={`url(#${clip})`}>
        {shown.map((t, i) => (
          <T key={t} x={2190} y={legendY + i * 6.704} s={5.88} a="start" fill={TISSUE_COLORS[i]}>{t}</T>
        ))}
      </g>
      {ticksX.map((v) => (
        <g key={v}>
          <path d={`M${zeroX + v * stepX} ${bottom}v4.5`} stroke="#000" />
          <T x={zeroX + v * stepX} y={bottom + 12.5} fill="#222">{v * 100}</T>
        </g>
      ))}
      {yTicks.map(([v, y]) => (
        <g key={v}>
          <path d={`M${fx} ${y}h-4.5`} stroke="#000" />
          <T x={2168.5} y={y} fill="#222" r>{v}</T>
        </g>
      ))}
      <T x={2993.5} y={bottom + 29.5} fill="#222">{dim1}</T>
      <T x={2152} y={(frameY + bottom) / 2} fill="#222" r>{dim2}</T>
      {points.map(([n, u, v]) => (
        <g key={n}>
          <rect x={dotX(u) - 1} y={dotY(v) + 4} width="2" height="2" fill={tissueColor(n)} />
          <T x={dotX(u)} y={dotY(v)} s={5.61} fill={tissueColor(n)}>{n}</T>
        </g>
      ))}
    </Chart>
  );
}

const HEAT_GENES = ["INSM1", "NEUROD1", "PAX6", "NKX6-1", "SST", "RFX6", "ISL1", "PDX1", "IAPP", "INS", "SLC30A8", "GCG", "MAFA"];
const HEAT = [
  ["EndoC-BetaH1", .83,.84,.84,.81,.39,.93,.84,.93,.69,.85,.84,.28,.81],
  ["LCM Beta cell", .7,.85,.84,.83,.81,.92,.86,.80,.95,.95,.96,.87,.9],
  ["FACS sorted Beta cell", .73,.77,.79,.85,.78,.89,.79,.83,1,.96,.91,1,.88],
  ["Islet", .66,.73,.72,.81,.76,.84,.76,.79,.97,.92,.90,.97,.82],
  ["Heart", .07,.03,.16,.08,.10,.17,.21,.37,.31,.21,.25,.35,.45],
  ["Skeletal muscle", .07,.03,.21,.08,0,.17,.28,.35,.28,.36,.25,.37,.82],
  ["Adipose tissue", .4,.03,.09,.08,0,.17,.25,.39,.40,.36,.5,.21,.37],
  ["Mature adipocyte", .21,.17,.11,.22,0,.17,0,.17,.37,.29,.46,.44,.37],
  ["Lung", .07,.33,.10,.26,.26,.36,0,0,.14,.27,.25,.21,.31],
  ["Pre-adipocyte", .07,.28,.26,.47,0,.17,0,0,.36,.36,.25,.21,.10],
  ["Dorsal Root Ganglion", .07,.03,.08,.42,.52,.45,.65,.32,.28,.29,.25,.21,.44],
  ["Kidney", .07,.29,.15,.21,.25,.45,.29,.34,.35,.36,.62,.21,.10],
  ["Liver", .07,.29,.23,.33,.17,.17,.36,.38,.50,.34,.25,.40,.28],
  ["Substantia Nigra", .53,.53,.57,.65,.46,.46,.25,0,.44,.13,.25,.21,.37],
  ["Brain", .52,.54,.60,.48,.58,.17,.29,.26,.32,.28,.25,.21,.37],
  ["Insula", .54,.56,.58,.41,.60,.17,.34,.32,.25,.13,.25,.37,.49],
  ["Frontal Lobe", .51,.57,.54,.24,.59,.35,.15,.39,.25,.15,.25,.26,.24],
  ["Hippocampus", .50,.58,.59,.45,.60,.46,.45,.37,.41,.29,.25,.21,.10],
  ["Pituitary gland", .72,.53,.50,.08,.35,.36,.58,.32,.14,.30,.25,.21,.10],
  ["Caudate Nucleus", .59,.28,.57,.42,.58,.38,.54,.33,.25,.35,.36,.21,.25],
  ["Hypothalamus", .53,.36,.50,.54,.61,.17,.60,.40,.36,.35,.25,.38,.33],
  ["Exocrine pancreas", .32,.14,.18,.65,.45,.41,.46,.69,.62,.69,.65,.65,.41],
  ["Colon", .46,.50,.28,.08,.47,.54,.46,.41,.13,.44,.36,.69,.44],
  ["Small Intestine", .54,.53,.33,.36,.56,.59,.50,.69,.14,.32,.25,.69,.16],
];

const LEAVES = [632, 667, 703, 738, 772, 808, 843, 880, 913, 950, 985, 1019, 1055, 1090, 1126, 1161, 1197, 1231, 1266, 1302, 1337, 1374, 1408, 1444];
/* [joined at, first child, second child]; a child is a leaf number or another node */
const TREE_LEFT = [1131, 0, [1085, 1, [1080, 2, 3]]];
const TREE_RIGHT = [1262,
  [1126, [1105, [1093, 4, 5], [1095, 6, 7]], [1119, [1097, 8, 9], [1109, 10, [1100, 11, 12]]]],
  [1158,
    [1110, [1103, 13, [1098, [1085, 14, 15], [1094, 16, 17]]], [1105, 18, [1090, 19, 20]]],
    [1126, 21, [1097, 22, 23]]],
];
const treeX = (x) => 1000 + x / 1.686;
const treeY = (y) => 1070 + y / 2.148;
function branch(node, out) {
  if (typeof node === "number") return [treeX(1077), treeY(LEAVES[node])];
  const [xa, ya] = branch(node[1], out);
  const [xb, yb] = branch(node[2], out);
  const x = treeX(node[0]);
  out.push(`M${xa.toFixed(1)} ${ya.toFixed(1)}H${x.toFixed(1)}V${yb.toFixed(1)}H${xb.toFixed(1)}`);
  return [x, (ya + yb) / 2];
}
function treePath(root) {
  const out = [];
  const [x, y] = branch(root, out);
  out.push(`M${x.toFixed(1)} ${y.toFixed(1)}H${treeX(1494).toFixed(1)}`);
  return out.join("");
}

function Heatmap() {
  const x0 = 473.2, y0 = 1354, cw = 89.5, ch = 16.51;
  return (
    <Chart width={1673} height={444} viewBox="220 1353.5 1673 444">
      {HEAT.map(([name, ...vals], r) => (
        <g key={name}>
          <T x={471.3} y={y0 + (r + 0.5) * ch + 0.8} s={7.67} a="end" fill="#222">{name}</T>
          {vals.map((v, c) => (
            <rect key={c} x={x0 + c * cw} y={y0 + r * ch} width={cw + 0.3} height={ch + 0.3} fill={viridis(v)} />
          ))}
        </g>
      ))}
      {HEAT_GENES.map((g, c) => (
        <T key={g} x={x0 + (c + 0.5) * cw + 1} y={1753.4} s={7.8} a="end" fill="#111" r>{g}</T>
      ))}
      <path d={treePath(TREE_LEFT) + treePath(TREE_RIGHT)} fill="none" stroke="#000" />
      <defs>
        <linearGradient id="scale">
          {[0, 1, 2, 3, 4, 5, 6, 7, 8].map((k) => <stop key={k} offset={k / 8} stopColor={viridis(0.04 + k * 0.113)} />)}
        </linearGradient>
      </defs>
      <T x={324} y={1757.6} s={7} a="start" fill="#111">Scaled</T>
      <T x={324} y={1764.6} s={7} a="start" fill="#111">expression</T>
      <rect x={325} y={1768.5} width={52} height={10.5} fill="url(#scale)" />
      {[[-1, 330.5], [0, 345], [1, 358], [2, 372]].map(([v, x]) => (
        <g key={v}>
          <path d={`M${x} 1768.5v2.2M${x} 1779v-2.2`} stroke="#fff" strokeWidth="1" />
          <T x={x} y={1785} s={5} fill="#555">{v}</T>
        </g>
      ))}
    </Chart>
  );
}

const ENRICHED = { "Skeletal muscle": [338, 0.26], Islet: [832, 0.13], "FACS sorted Beta cell": [982.8, 0.09], "LCM Beta cell": [1807.5, 0.045], "EndoC-BetaH1": [1342.5, 0] };

function Enrichment() {
  const names = HEAT.map((r) => r[0]).reverse();
  const x0 = 326.9, unit = 139.1;
  return (
    <Chart width={1673} height={243} viewBox="220 1917 1673 243">
      <g fill="none">
        {[1.5, 4.5, 7.5, 10.5].map((v) => <path key={v} d={`M${x0 + v * unit} 1927V2134`} stroke="#e4e4e4" />)}
        {[3, 6, 9].map((v) => <path key={v} d={`M${x0 + v * unit} 1927V2137`} stroke="#c8c8c8" />)}
        {names.map((n, i) => <path key={n} d={`M${x0} ${1936.8 + i * 8.59}H1882.5`} stroke="#bdbdbd" />)}
      </g>
      {names.map((n, i) => {
        const y = 1933 + i * 8.61;
        const e = ENRICHED[n];
        return (
          <g key={n}>
            <T x={323.6} y={y + 0.5} s={8.1} a="end" fill="#333">{n}</T>
            <path d={`M${x0 - 3} ${y}h3`} stroke="#b3b3b3" />
            {e && <rect x={x0} y={y - 3.2} width={e[0] - x0} height={6.6} fill={viridis(e[1])} />}
          </g>
        );
      })}
      <rect x={x0} y={1927.5} width={1555.5} height={207} fill="none" stroke="#b3b3b3" />
      <path d="M508.5 1927.5V2134" stroke="#000" />
      {[0, 3, 6, 9].map((v) => (
        <g key={v}>
          <path d={`M${x0 + v * unit} 2134v3`} stroke="#b3b3b3" />
          <T x={x0 + v * unit} y={2143.3} s={7.1} fill="#333">{v}</T>
        </g>
      ))}
      <text x={1104.7} y={2157} fontSize="7.9" textAnchor="middle" fill="#222">
        −log<tspan fontSize="5.2" dy="2">10</tspan><tspan dy="-2"> Pvalue</tspan>
      </text>
      <T x={235.3} y={2030} s={7.75} fill="#222" r>Samples</T>
    </Chart>
  );
}

/* bar lengths from the last sample up to the first */
const MARKER_BARS = [
  384.9, 1211.5, 295.9, 302.8, 142.6, 0, 720.7, 635.8, 701.4, 72, 202.9, 333.8, 1335.5, 436.5, 523.7, 748.5,
  289.6, 324.6, 192.6, 405.5, 295.9, 282.7, 314.8, 302.8, 84.6, 850.7, 905.7, 305, 62.8, 1101.4, 405.5, 14.6,
  225.8, 42.7, 759.8, 690.8, 413.6, 371.7, 665.6, 575.4, 469.8, 251.7, 347.5, 511.7, 522, 537, 266, 429.1,
  522.8, 353.9, 355, 351.6, 391.7, 294.7, 518.6, 378, 312.5, 547.6, 512.9, 352.7, 324.6, 299.9, 409, 317.7,
  430.8, 387.7, 351.6, 248.8, 254.5, 394, 243.6, 192, 285, 313.7, 289.6, 321.7, 198.9, 287.8, 216.7, 246,
  484.7, 252.8, 801.6, 312.5, 391.7, 364.8, 460, 382, 494, 285.5, 256.8, 159.8, 320.6, 289.6, 0, 839.4, 865.9,
  850, 368.8,
];

function MarkerBars() {
  const x0 = 2278.5, unit = 120.45;
  const n = SAMPLES.length;
  return (
    <Chart width={1690} height={726} viewBox="2140 1334.5 1690 726">
      {[1.5, 4.5, 7.5, 10.5].map((v) => <path key={v} d={`M${x0 + v * unit} 1338V2027`} stroke="#dcdcdc" />)}
      {[3, 6, 9].map((v) => <path key={v} d={`M${x0 + v * unit} 1338V2030`} stroke="#b9b9b9" />)}
      {MARKER_BARS.map((w, i) => {
        const k = n - 1 - i;
        const y = 1341.4 + i * 6.963;
        return (
          <g key={k}>
            <T x={2274} y={y + 1.9} s={7.15} a="end" fill="#2a2a2a">{SAMPLES[k]}</T>
            <path d={`M${x0 - 3} ${y + 1.2}h3`} stroke="#b3b3b3" />
            <rect x={x0} y={y - 2.4} width={w} height={5} fill={viridis(TISSUE_OF[k] / 49)} />
          </g>
        );
      })}
      <rect x={x0} y={1338} width={1403.5} height={689} fill="none" stroke="#b3b3b3" />
      {[0, 3, 6, 9].map((v) => (
        <g key={v}>
          <path d={`M${x0 + v * unit} 2027v3`} stroke="#b3b3b3" />
          <T x={x0 + v * unit} y={2035.3} s={7} fill="#333">{v}</T>
        </g>
      ))}
      <T x={2979.5} y={2046.3} s={7.75} fill="#222">Expression</T>
      <T x={2155.7} y={1682.5} s={7.75} fill="#222" r>Samples</T>
      <T x={3690.8} y={1425.5} s={7.75} a="start" fill="#222">Tissues</T>
      {TISSUES.map((t, i) => (
        <g key={t}>
          <rect x={3692} y={1430.4 + i * 10.328} width={9} height={9.3} fill={viridis(i / 49)} />
          <T x={3702.7} y={1435.7 + i * 10.328} s={7.1} a="start" fill="#333">{t}</T>
        </g>
      ))}
    </Chart>
  );
}

/* ---------- screens ---------- */

const ALL_GENES = ["ACTB", "B2M", "C1orf43", "CHMP2A", "EMC7", "GAPDH", "GPI", "HMBS", "HPRT1", "PSMB2", "PSMB4", "RAB7A", "REEP5", "RPLP0", "SNRPD3", "VCP", "VPS29"];

const RawExpression = () => (
  <Screen title="Study of the housekeeping genes" section="norm" active="Raw expression">
    <Columns $n={2}>
      <Box title="Correlation circle" h={398}><CorrelationCircle /></Box>
      <Box title="Select a set of genes" tone={CYAN} h={72}>
        <Checks items={ALL_GENES} checked={GENES} top={21} />
      </Box>
    </Columns>
    <Columns $n={2}>
      <Box title="Representation of the raw expressions of the housekeeping genes in the EndoBeta cells" h={420} headH={25}>
        <DownloadButton />
        <LineChart
          left={220} names={ENDO} series={ENDO_SERIES} frame={[262.5, 728]} bottom={820.5} first={270.5}
          step={14.516} unit={0.03067} zero={813.5} legendX={1000} legendY={645.3} labelY={697}
        />
      </Box>
      <Box title="Representation of the raw expressions of the housekeeping genes in all the samples" h={420} headH={25}>
        <DownloadButton />
        <LineChart
          left={1075} names={SAMPLES} series={ALL_SERIES} frame={[1117.5, 728]} bottom={796.5} first={1121.6}
          step={7.349} unit={0.02727} zero={787.5} legendX={1855} legendY={633.3} labelY={685}
        />
      </Box>
    </Columns>
  </Screen>
);

const NormalisationSet = () => (
  <Screen title="Study of the housekeeping genes" section="norm" active="Normalisation set">
    <Box title="Study of a set of reference genes" tone={CYAN} h={105}>
      <Choices $top={21}>
        <Choice><Tick $round><Dot /></Tick>Usual housekeeping genes</Choice>
        <Choice><Tick $round />Housekeeping genes from Eisenberg et al. (2013)</Choice>
        <Choice><Tick $round />Control probes (Spikes)</Choice>
      </Choices>
      <Checks items={["ACTB", "B2M", "GAPDH", "HMBS", "HPRT1", "RPLP0"]} checked={["ACTB"]} top={20} />
    </Box>
    <Box title="Normalisation according to the whole set of selected control genes" h={398}>
      <Scatter
        top={248} height={372} frameY={288.5} frameH={283} titleY={272.5} zeroX={3014.5} stepX={353.5}
        ticksX={[-2, -1, 0, 1, 2]} yTicks={[[40, 294.5], [20, 365.5], [0, 436.5], [-20, 506.5]]} zeroY={436.5}
        points={PCA_ALL} dim1="Dim 1 (35.02%)" dim2="Dim 2 (14.93%)" legendY={297.2}
      />
    </Box>
    <Box title="Normalisation according to the set of selected genes" h={399} headH={25}>
      <Scatter
        top={659} height={372} frameY={699.5} frameH={283} titleY={683.6} zeroX={2976.5} stepX={233}
        ticksX={[-3, -2, -1, 0, 1, 2, 3]}
        yTicks={[[60, 717.5], [40, 763.5], [20, 810.5], [0, 856.5], [-20, 903.5], [-40, 950.5]]} zeroY={856.5}
        points={PCA_SELECTED} dim1="Dim 1 (32.73%)" dim2="Dim 2 (14.46%)" legendY={708.2}
      />
    </Box>
  </Screen>
);

const TissueRepresentations = () => (
  <Screen title="Heatmap and enrichment representations" section="carto" active="Global representations (tissues)" scroll>
    <Box title="Selection of the group of genes" tone={CYAN} h={26} open={false} />
    <Box title="Selection of group(s) of samples" tone={CYAN} h={27} open={false} />
    <Columns $n={3}>
      <Box title="For adding cluster separation in the heatmap" tone={CYAN} h={26} open={false} />
      <Box title="For adjusting the heatmap height" tone={CYAN} h={26} open={false} />
      <Box title="For adjusting the heatmap width" tone={CYAN} h={26} open={false} />
    </Columns>
    <Box title="Heatmap representation in groups of samples" h={498}>
      <DownloadButton />
      <Heatmap />
    </Box>
    <Box title="Standard deviation added to the mean for declaring expressed value" tone={CYAN} h={26} open={false} />
    <Box title="Enrichment representation in groups of samples" h={330}>
      <DownloadButton />
      <Choices $top={3} $left={812.5}>
        <Choice $bold><Tick />Odds Ratios</Choice>
      </Choices>
      <Enrichment />
    </Box>
  </Screen>
);

const Markers = () => (
  <Screen title="Study of the markers" section="carto" active="Markers">
    <Box title="Select a set of markers" tone={CYAN} h={83}>
      <Select><span>marker liver</span><FaCaretDown size={8} /></Select>
    </Box>
    <Box title="Average expression of the markers" h={805}>
      <DownloadButton top={7} />
      <MarkerBars />
      <FootNote>*Expressions are normalised with the following housekeeping genes C1orf43, PSMB2, PSMB4, VCP, VPS29</FootNote>
    </Box>
    <Box title="Expression of the markers" h={26} open={false} />
  </Screen>
);

export default function App() {
  return (
    <>
      <Global />
      <Wall>
        <RawExpression />
        <NormalisationSet />
        <TissueRepresentations />
        <Markers />
      </Wall>
    </>
  );
}
